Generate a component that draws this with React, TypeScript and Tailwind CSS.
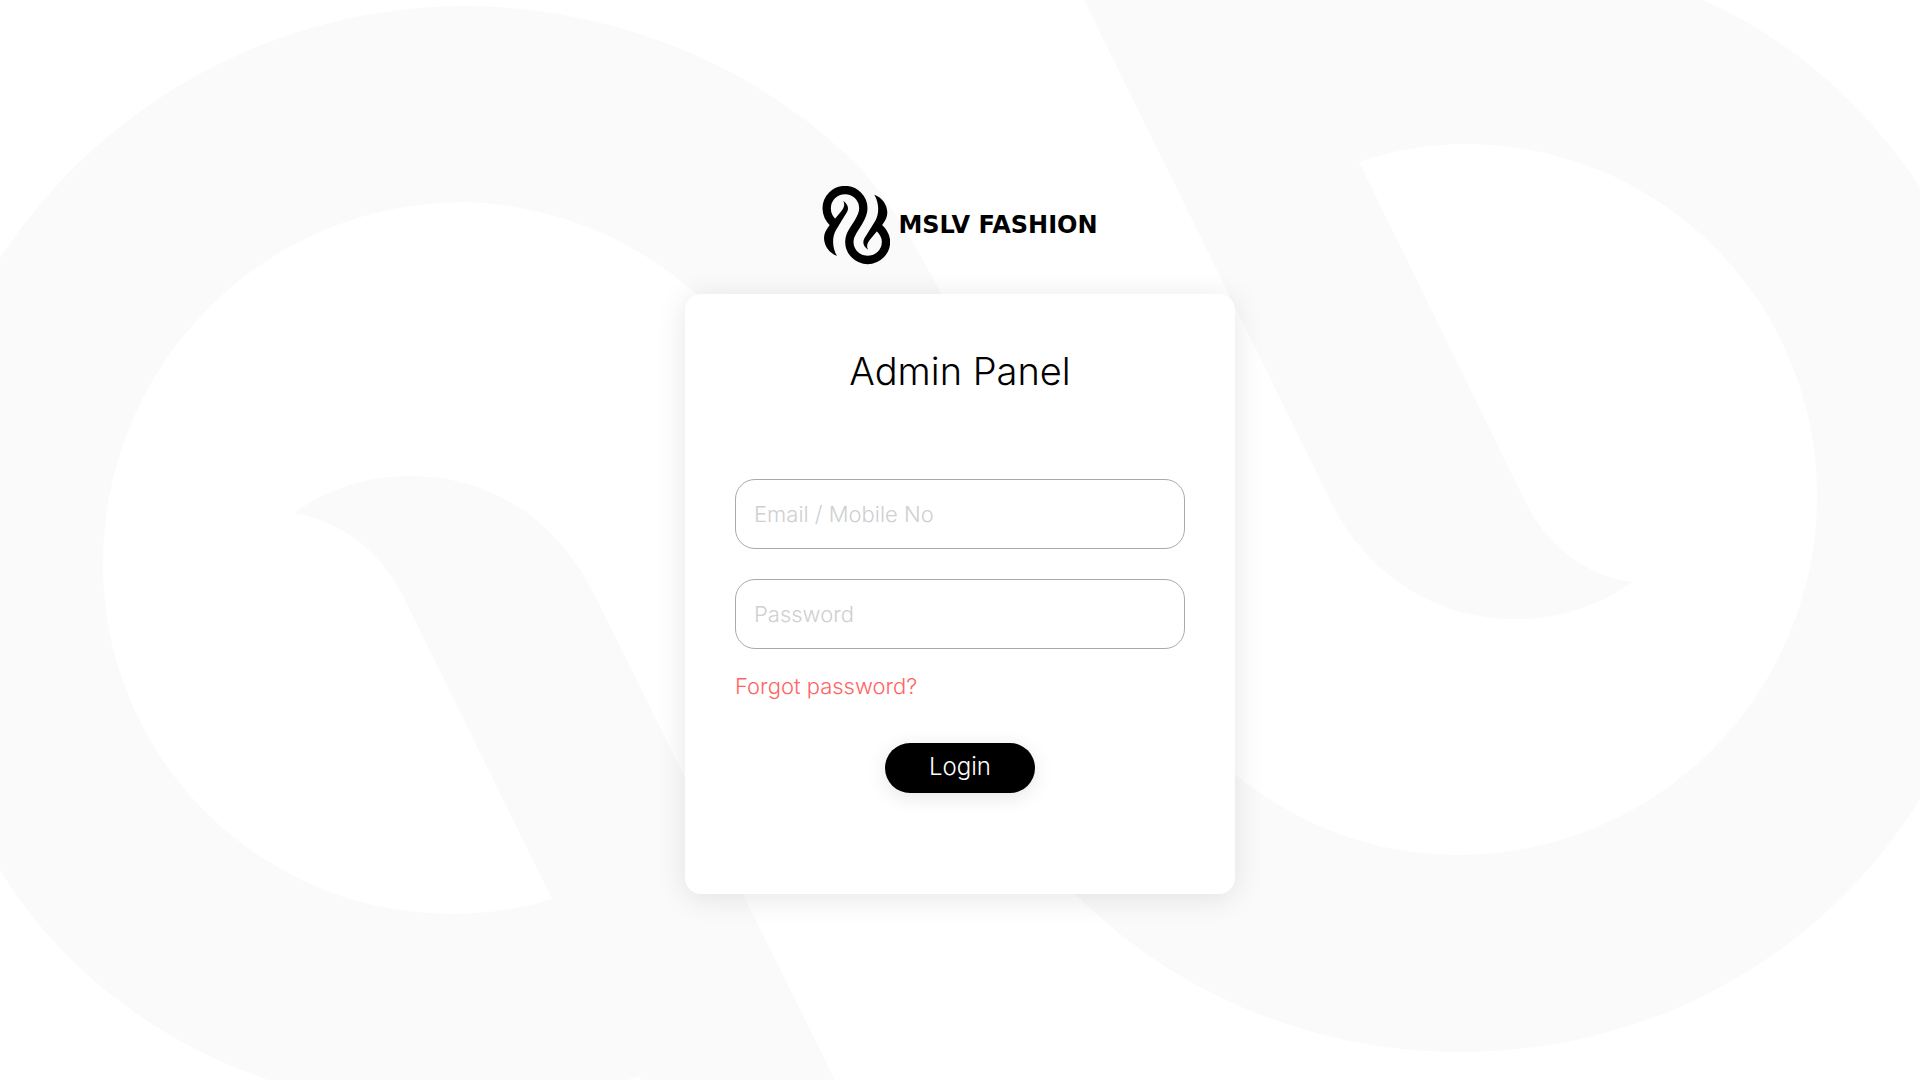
function Backdrop() {
  return (
    <svg
      aria-hidden="true"
      className="absolute inset-0 h-full w-full"
      viewBox="0 0 1920 1080"
      preserveAspectRatio="xMidYMid slice"
      fill="#fafafa"
    >
      <path d="M0 258 A558 558 0 0 1 462 6 C614 6 760 66 862 170 C892 204 914 244 934 280 L960 330 L740 330 L695 293 A361 361 0 0 0 465 202 A361 361 0 0 0 103 563 A349 349 0 0 0 450 914 C486 914 520 909 552 899 L401 592 C378 549 340 521 294 513 C328 488 368 476 410 476 C490 476 556 519 593 592 L835 1080 L641 1080 L639 1076 L628 1080 L269 1080 C156 1042 60 968 0 870 Z" />
      <path d="M1084 0 L1335 510 C1372 577 1437 619 1515 619 C1558 619 1598 607 1632 582 C1590 577 1549 549 1526 503 L1359 162 C1393 150 1429 144 1467 144 A351 351 0 0 1 1817 496 A359 359 0 0 1 1459 855 C1377 855 1300 827 1236 775 L1180 730 L1040 860 L1075 894 C1174 993 1312 1052 1459 1052 C1655 1052 1825 953 1920 799 L1920 187 C1864 103 1791 39 1703 0 Z" />
    </svg>
  );
}

const BLADE =
  "M124 93 C132 99 139 107 138 117 C137 124 133 130 129 136 L102 180 C90 200 90 232 105 258 C82 249 67 230 66 205 C66 190 72 180 81 168 L119 122 C127 112 129 103 124 93 Z";

function LogoMark() {
  return (
    <svg aria-hidden="true" className="h-20 w-[68px]" viewBox="60 48 204 240" fill="none">
      <path
        d="M95 160 C81 147 74 131 74 115 A55 55 0 0 1 184 115 C184 132 177 144 169 157 L153 182 C146 193 142 203 142 215 A55 55 0 0 0 252 215 C252 199 243 184 229 171"
        stroke="#000"
        strokeWidth="25"
      />
      <path d={BLADE} fill="#000" />
      <path d={BLADE} fill="#000" transform="rotate(180 161 166)" />
    </svg>
  );
}

const FIELD =
  "h-[70px] w-full rounded-[20px] border border-[#aaaaaa] bg-transparent px-[18px] text-[22px] font-light text-black outline-none placeholder:text-[#cfcfcf] focus:border-black";

export default function App() {
  return (
    <main className="relative flex min-h-screen flex-col items-center justify-center overflow-hidden bg-white font-['Inter',sans-serif]">
      <Backdrop />
      <header className="relative mb-7 flex items-center gap-2">
        <LogoMark />
        <span className="pb-0.5 font-['DejaVu_Sans',sans-serif] text-[24px] leading-none font-bold text-black">
          MSLV FASHION
        </span>
      </header>
      <form
        className="relative flex min-h-[600px] w-full max-w-[550px] flex-col rounded-2xl bg-white px-[50px] pt-[50px] pb-[100px] shadow-[0_4px_30px_rgba(0,0,0,0.1)]"
        onSubmit={(e) => e.preventDefault()}
      >
        <h1 className="mb-[81px] text-center text-[38px] leading-[54px] font-light text-black">Admin Panel</h1>
        <div className="flex flex-col gap-[30px]">
          <input className={FIELD} type="text" aria-label="Email or mobile number" placeholder="Email / Mobile No" />
          <input className={FIELD} type="password" aria-label="Password" placeholder="Password" />
        </div>
        <a href="#forgot" className="mt-[22px] self-start text-[22px] leading-[30px] font-light text-[#ff6464]">
          Forgot password?
        </a>
        <button
          type="submit"
          className="mt-[42px] h-[50px] w-[150px] self-center rounded-full bg-black pb-0.5 text-[24px] leading-none font-light text-white shadow-[0_4px_20px_rgba(0,0,0,0.1)]"
        >
          Login
        </button>
      </form>
    </main>
  );
}
